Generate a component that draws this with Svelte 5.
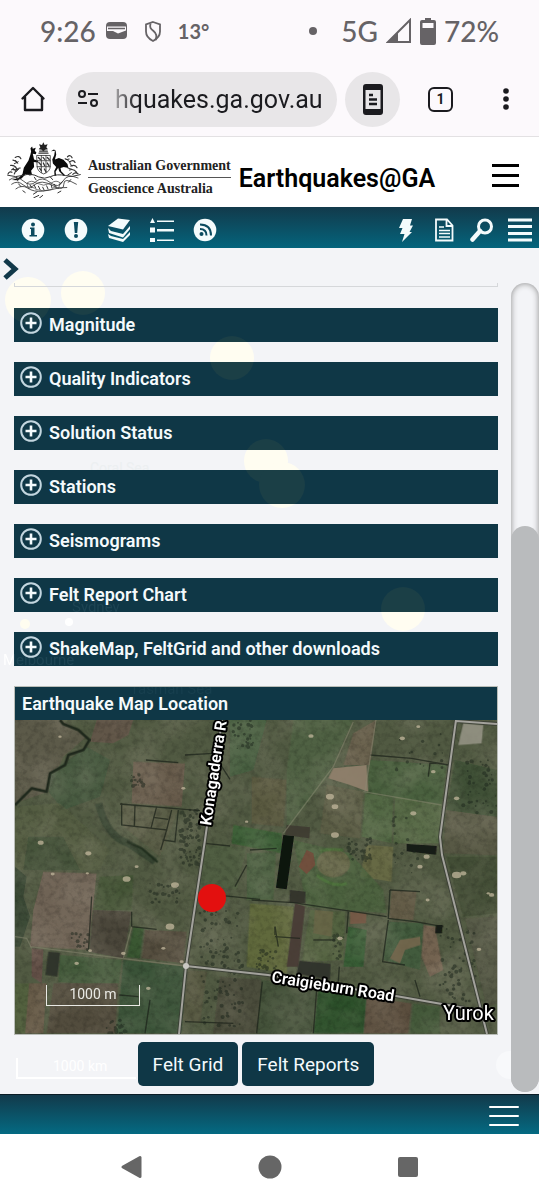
<script>
  const sections = [
    'Magnitude',
    'Quality Indicators',
    'Solution Status',
    'Stations',
    'Seismograms',
    'Felt Report Chart',
    'ShakeMap, FeltGrid and other downloads'
  ];
  let open = $state(-1);

  const quakes = [
    [28, 52, 23], [83, 45, 22], [232, 110, 22], [266, 213, 22], [282, 237, 23], [403, 361, 22]
  ];

  // [fill, opacity, polygon points] for paddocks on the aerial map
  const fields = [
    ['#625c49', 0.75, '45,30 185,30 260,80 190,140 145,245 45,280'],
    ['#3f5a3c', 0.7, '150,190 260,110 330,150 300,260 190,300 145,245'],
    ['#6b5648', 0.7, '290,30 400,30 385,75 340,100 270,95'],
    ['#6e5b4a', 0.8, '400,155 555,160 545,290 395,280'],
    ['#5a5b42', 0.7, '360,285 535,300 480,440 370,350'],
    ['#56603f', 0.7, '45,290 180,280 330,420 300,480 45,480'],
    ['#3c5235', 0.7, '85,380 190,380 240,480 70,480'],
    ['#776555', 0.85, '130,485 290,490 265,720 90,710 100,600'],
    ['#3e552f', 0.7, '300,500 400,495 395,600 280,600'],
    ['#4a4338', 0.9, '280,600 395,605 370,745 268,725'],
    ['#34562f', 0.9, '400,650 432,655 420,745 380,742'],
    ['#564b3b', 0.8, '435,660 560,665 550,760 425,745'],
    ['#6b4d48', 0.8, '95,715 130,718 125,820 95,800'],
    ['#6f5c47', 0.8, '85,820 140,820 130,970 75,970'],
    ['#53613a', 0.8, '45,820 88,820 75,970 45,970'],
    ['#3b5a33', 0.8, '180,735 365,750 355,830 175,815'],
    ['#544a3a', 0.85, '160,820 355,820 345,970 140,970'],
    ['#315334', 0.85, '370,750 558,770 545,970 350,970'],
    ['#59583f', 0.8, '565,780 620,785 600,940 548,930'],
    ['#3f623c', 0.7, '690,30 800,30 760,180 690,200'],
    ['#286026', 0.75, '700,345 845,370 845,430 695,400'],
    ['#60583c', 0.7, '755,200 860,210 850,350 755,340'],
    ['#50603f', 0.8, '615,405 740,410 710,540 600,520'],
    ['#4d6440', 0.8, '880,30 1060,30 990,190 860,360 860,180'],
    ['#70614c', 0.8, '1060,70 1128,30 1110,165 1030,165'],
    ['#5f5e42', 0.8, '980,225 1090,245 1080,385 960,370'],
    ['#4f6b3d', 0.8, '1095,250 1180,262 1175,400 1085,380'],
    ['#446338', 0.8, '1110,150 1340,165 1325,285 1100,250'],
    ['#516b3f', 0.8, '1185,260 1325,285 1320,400 1180,400'],
    ['#6c6d40', 0.8, '1100,405 1180,410 1175,515 1080,500'],
    ['#47643a', 0.8, '880,390 1050,430 1150,540 1160,610 920,590'],
    ['#5a5842', 0.8, '1340,300 1491,320 1491,435 1330,430'],
    ['#37502f', 0.8, '1365,150 1491,180 1491,320 1340,300'],
    ['#3f4d30', 0.8, '1340,440 1491,440 1491,610 1390,620'],
    ['#565843', 0.8, '1395,625 1491,620 1491,880 1460,890'],
    ['#5f6b34', 0.9, '750,580 882,590 860,790 740,770'],
    ['#3f5d35', 0.8, '740,430 828,425 820,570 740,570'],
    ['#53673b', 0.8, '930,600 1035,605 1030,750 905,755'],
    ['#2b5d2c', 0.9, '1045,650 1100,660 1090,770 1030,770'],
    ['#63553f', 0.8, '1175,540 1250,545 1240,630 1168,625'],
    ['#3c5c39', 0.8, '1165,635 1270,640 1260,780 1150,750'],
    ['#7c6550', 0.85, '1272,645 1305,650 1330,780 1290,800 1265,740'],
    ['#4b4a39', 0.8, '660,800 785,810 775,970 640,970'],
    ['#3d5133', 0.8, '785,810 950,840 935,970 770,970'],
    ['#265126', 0.9, '955,840 1100,860 1090,970 940,970'],
    ['#5e4c3b', 0.9, '1100,860 1235,880 1225,970 1092,970'],
    ['#3f5a35', 0.8, '1240,880 1320,890 1320,970 1230,970']
  ];

  // dams, plantations and bare ground that stand out from the paddocks
  const blocks = [
    ['#8f806c', 0.95, '1000,175 1100,165 1105,245 1050,225 985,205'],
    ['#0a120d', 1, '850,375 882,378 860,538 828,533'],
    ['#483b36', 0.95, '885,580 915,590 895,770 860,770'],
    ['#30302a', 0.9, '870,540 917,545 915,580 868,578'],
    ['#2f312b', 0.95, '898,752 992,762 990,810 890,790'],
    ['#151a14', 1, '1220,402 1310,408 1308,434 1220,424'],
    ['#2c3129', 0.9, '145,725 180,728 172,800 136,795'],
    ['#3d3a31', 0.9, '860,345 930,352 928,385 855,375'],
    ['#7a4538', 0.75, '920,420 940,430 946,465 920,492 896,470'],
    ['#72654a', 0.6, '945,600 1000,605 995,680 940,670'],
    ['#7d5b49', 0.8, '1050,605 1100,610 1098,640 1050,642'],
    ['#9c9a8c', 0.8, '1390,40 1450,45 1445,100 1375,105'],
    ['#151a14', 1, '1308,645 1328,645 1326,670 1306,670'],
    ['#7b6850', 0.8, '1200,690 1260,680 1262,705 1215,720 1200,760 1170,745']
  ];

  const hedges = [
    '365,280 365,345 500,360 515,300', '405,285 403,350', '360,282 600,302', '470,290 453,355',
    '460,322 505,328', '500,360 482,420', '535,300 525,395 488,390', '438,150 535,158', '555,135 640,130 690,208',
    '395,605 395,650 470,658', '615,400 690,408', '600,550 750,565 780,568', '740,465 705,530',
    '450,870 435,970', '358,855 415,860', '555,935 700,940', '755,570 880,578 1160,620',
    '825,675 825,650', '825,680 900,685', '1110,135 1235,145 1345,165', '1285,200 1290,160 1310,160',
    '1170,540 1260,545', '1170,540 1165,625 1245,635 1330,650', '1165,630 1148,755 1215,765',
    '1045,605 1040,670', '950,840 940,970', '787,815 770,970', '1018,770 1015,815', '940,690 1005,690',
    '825,650 835,710', '750,420 830,415', '1245,810 1260,860', '275,560 265,725'
  ];

  const tracks = [
    '90,710 365,745 558,768', '395,650 370,745', '1060,35 1000,170 850,370', '1128,30 1095,245', '1090,245 1325,285',
    '45,680 80,685 95,715'
  ];

  const houses = [
    [122, 398, 9], [265, 430, 9], [158, 492, 6], [262, 490, 5], [380, 507, 12], [410, 470, 6], [525, 525, 12],
    [510, 650, 13], [545, 755, 6], [270, 722, 6], [370, 730, 7], [230, 760, 7], [445, 835, 7], [180, 80, 5],
    [933, 78, 8], [1255, 50, 6], [1207, 85, 8], [990, 260, 12], [1005, 290, 10], [1005, 375, 12], [1240, 310, 9],
    [1370, 495, 14], [1390, 490, 9], [1280, 440, 9], [1260, 470, 8], [1370, 265, 8], [1475, 555, 8], [1465, 550, 5],
    [1437, 718, 7], [1283, 570, 6], [550, 235, 6], [490, 715, 6], [1300, 185, 7], [740, 335, 5], [1020, 685, 8]
  ];

  // deterministic scatter for tree clusters
  function scatter(seed, n, x, y, w, h) {
    const out = [];
    let s = seed;
    const next = () => (s = (s * 16807) % 2147483647) / 2147483647;
    for (let i = 0; i < n; i++) out.push([Math.round(x + next() * w), Math.round(y + next() * h), 2 + Math.round(next() * 4)]);
    return out;
  }
  const trees = [
    ...scatter(11, 90, 540, 300, 60, 165),
    ...scatter(23, 110, 600, 600, 130, 350),
    ...scatter(37, 40, 1390, 130, 100, 180),
    ...scatter(41, 40, 1045, 385, 70, 70),
    ...scatter(59, 50, 1320, 650, 110, 230),
    ...scatter(61, 25, 450, 520, 90, 60),
    ...scatter(73, 20, 320, 930, 60, 40),
    ...scatter(79, 25, 700, 30, 60, 90),
    ...scatter(83, 15, 1190, 60, 140, 130),
    ...scatter(89, 25, 770, 720, 60, 60),
    ...scatter(97, 20, 1000, 670, 35, 80),
    ...scatter(101, 18, 215, 670, 50, 50),
    ...scatter(103, 20, 395, 190, 40, 40),
    ...scatter(107, 20, 1180, 320, 80, 180)
  ];
</script>

<div class="screen">
  <div class="status">
    <span class="clock">9:26</span>
    <svg class="s-card" viewBox="0 0 22 18" width="22" height="18"><rect width="21" height="17" rx="4" fill="#666366" /><path d="M1 4.500h19v4l-8 3-5-2.500H1Z" fill="#fcf9fc" /><path d="M2 6.500h17" stroke="#666366" stroke-width="1.500" /></svg>
    <svg class="s-shield" viewBox="0 0 18 21" width="18" height="21" fill="none" stroke="#666366" stroke-width="1.800"><path d="M9 1 16 3.500v7C16 15 13 18 9 20 5 18 2 15 2 10.500v-7Z" /><path d="M6.500 2.500c-1 4 0 5 3 7.500s4 5 2 9" /></svg>
    <span class="temp">13°</span>
    <span class="grow"></span>
    <span class="dot"></span>
    <span class="net">5G</span>
    <svg class="s-signal" viewBox="0 0 26 26" width="26" height="26"><path d="M2 24 24 2v22Z" fill="none" stroke="#666366" stroke-width="2" /><path d="M1 25 12 14v11Z" fill="#666366" /></svg>
    <svg class="s-batt" viewBox="0 0 16 27" width="16" height="27"><path fill="#666366" fill-rule="evenodd" d="M5 0h6v2h3q2 0 2 2v21q0 2-2 2H2q-2 0-2-2V4q0-2 2-2h3ZM2.500 5v5h11V5Z" /></svg>
    <span class="pct">72%</span>
  </div>

  <div class="browser">
    <button class="plain home" aria-label="Home"><svg viewBox="0 0 26 26" width="26" height="26" fill="none" stroke="#1b1b1f" stroke-width="2.400" stroke-linejoin="round" stroke-linecap="round"><path d="M2.500 12.500 13 2l10.500 10.500M5 11v13h17V11" /></svg></button>
    <div class="url">
      <svg viewBox="0 0 22 18" width="22" height="18" fill="none" stroke="#1b1b1f" stroke-width="2"><circle cx="5" cy="4" r="3" /><path d="M11 4h10M1 13h9" /><circle cx="17" cy="13" r="3" /></svg>
      <input aria-label="Address" value="hquakes.ga.gov.au" />
    </div>
    <button class="plain reader" aria-label="Reading mode"><svg viewBox="0 0 20 31" width="20" height="31"><path fill="#1b1b1f" fill-rule="evenodd" d="M3 0h14q3 0 3 3v25q0 3-3 3H3q-3 0-3-3V3q0-3 3-3ZM2.500 6v19h15V6Z" /><path d="M6 11h4M6 15.500h8M6 20h8" stroke="#1b1b1f" stroke-width="2.400" /></svg></button>
    <button class="plain tabs" aria-label="Tabs">1</button>
    <button class="plain" aria-label="More"><svg viewBox="0 0 6 22" width="6" height="22" fill="#1b1b1f"><circle cx="3" cy="3" r="2.800" /><circle cx="3" cy="11" r="2.800" /><circle cx="3" cy="19" r="2.800" /></svg></button>
  </div>

  <header>
    <svg class="crest" viewBox="18 24 230 168" width="76" height="56" fill="none" stroke="#333" stroke-width="3" stroke-linecap="round">
      <path fill="#222" stroke="none" d="m131 24 4 8 9-2-4 9 5 6-9 2-5 5-5-5-9-2 5-6-4-9 9 2Z" />
      <path d="M120 51h23M118 57h27" stroke-width="4" />
      <path fill="#0a0a0a" stroke="none" d="m92 42 5-5 2 7 9-3-3 9 5 5-2 5-9-1 4 17 12 4v5l-13-1 1 15-9 11 3 13-7 2-12-5-13 14-12 5-18-1 21-6 12-12 4-19 14-22 6-18 2-9Z" />
      <path fill="#0a0a0a" stroke="none" d="m154 51 9-5 5 3 2 12-4 15 12-4 14 5 12 13 3 12-14-3-10 3 2 10 12 12-4 2-14-14-3-11-8 12 2 12-5 1-1-15 6-12-10-11-2-12 6-13 2-13-12 1Z" />
      <path d="M112 64h40v32q0 17-20 24-20-7-20-24ZM112 80h40M112 98h40M125 64v52M139 64v52" stroke-width="2.500" />
      <path d="m116 70 6 6m8-6 5 6m8-6 6 6m-32 9 7 8m7-6 4 8m8-8 5 8m-28 8 5 7m9-5 5 8" stroke-width="4" />
      <path d="M23 124q25 8 48 0t46 5q18 8 36-1t46-3q20 6 44-3" stroke-width="3" />
      <path d="M28 138q21-16 42 3t39 2 43 3 38-4 46-10M35 151q17-13 35 2t36-1 53 3 34-4 38 0M48 165q18-14 36-2t44 9 38-7 36-4" stroke-width="2.500" />
      <path d="M82 147q14-10 26 0l24 7 24-7q14-10 26 0l-5 17q-14-8-22 3-25 8-46 0-9-11-22-3Z" stroke-width="2" />
      <path d="m91 154 5 7m7-8 5 10m8-6 5 10m8-7 4 8m8-12 4 9m10-12 2 9m7-11 5 7" />
      <path d="M43 120q8-20 18-18M38 106q12 3 17 0M32 94q14-1 18 10M39 78q9 1 13 9M46 70q12-7 17 4M36 115q-7-4-12 5M204 68q9-8 14 3M210 84q12-9 17 1M214 96q14-6 19 5M210 108q13-5 22 7M220 121q7-7 16-2M197 74q6 4 12 1" stroke-width="3.500" />
      <path d="m42 102-8 6m21-25-12 6m14 15-8 9m-2-34 6 8m159 1 5 8m-12 6 13 4m-2 10-11 7m-2-46 9 7m-110 108 15-7m2 8 10-8M101 181l11-7M69 171l7 5m108-4-9 5M54 141l-5-11m15 29-8-9m48-20 5 8m43-9 7 8m30 6-8 7m33-13-7 8" stroke-width="3" />
    </svg>
    <div class="gov"><span>Australian Government</span><span>Geoscience Australia</span></div>
    <h1>Earthquakes@GA</h1>
    <button class="plain menu" aria-label="Menu"><i></i><i></i><i></i></button>
  </header>

  <nav class="tools">
    <button class="plain" aria-label="Information"><svg viewBox="0 0 24 24" width="24" height="24"><circle cx="12" cy="12" r="11.300" fill="#f4fbfc" /><circle cx="12" cy="6.500" r="2" fill="#0b4b5f" /><path d="M9 9.500h4.500V17H16v1.500H8.500V17H10v-6H9Z" fill="#0b4b5f" /></svg></button>
    <button class="plain" aria-label="Alerts"><svg viewBox="0 0 24 24" width="24" height="24"><circle cx="12" cy="12" r="11.300" fill="#f4fbfc" /><path d="M9.800 4h4.400l-1 11h-2.400Z" fill="#0b4b5f" /><circle cx="12" cy="18" r="2" fill="#0b4b5f" /></svg></button>
    <button class="plain" aria-label="Layers"><svg viewBox="0 0 24 24" width="24" height="24" fill="#f4fbfc"><path d="m11 .500 12 1.500-7 9.500L1 8Z" /><path d="m1 10 3 3 12 3 7-8v3l-7 8.500L2 15ZM1 16l3 2 12 3 7-7v3l-7 7L2 20Z" /></svg></button>
    <button class="plain" aria-label="Legend"><svg viewBox="0 0 24 24" width="24" height="24" fill="#f4fbfc"><path d="m2.500 0 2.500 5H0ZM7 2.500h17v1.500H7ZM0 9.500h5v5H0ZM7 11h17v2.500H7ZM0 20h5v4H0ZM7 21.500h17V23H7Z" /></svg></button>
    <button class="plain" aria-label="Feed"><svg viewBox="0 0 24 24" width="24" height="24"><circle cx="12" cy="12" r="11.300" fill="#f4fbfc" /><g fill="none" stroke="#0b4b5f" stroke-width="2"><path d="M7 6.500q11 0 11 11M7 11q6.500 0 6.500 6.500" /></g><circle cx="8.500" cy="16" r="2" fill="#0b4b5f" /></svg></button>
    <span class="grow"></span>
    <button class="plain" aria-label="Recent quakes"><svg viewBox="0 0 24 24" width="24" height="24" fill="#f4fbfc"><path d="M9 1h9l-2 6.500h3L15.500 14H18L8 24l2.500-8H6l2.500-6H5Z" /></svg></button>
    <button class="plain" aria-label="Report"><svg viewBox="0 0 24 24" width="24" height="24" fill="none" stroke="#f4fbfc" stroke-width="1.800"><path d="M4 1.500h11l5.500 6V22.500H4ZM14.500 2v6h6" /><path d="M7 9h5M7 12.500h11M7 15.500h11M7 19h11" stroke-width="1.500" /></svg></button>
    <button class="plain" aria-label="Search"><svg viewBox="0 0 24 24" width="24" height="24" fill="none" stroke="#f4fbfc"><circle cx="15" cy="8.500" r="6.500" stroke-width="3" /><path d="m10 13-7.500 8.500" stroke-width="4.500" stroke-linecap="round" /></svg></button>
    <button class="plain" aria-label="List"><svg viewBox="0 0 24 24" width="24" height="24" stroke="#f4fbfc" stroke-width="3"><path d="M0 2h24M0 8.500h24M0 15.500h24M0 22h24" /></svg></button>
  </nav>

  <main>
    <svg class="ghost" viewBox="0 0 539 846" aria-hidden="true">
      {#each quakes as [x, y, r]}<circle cx={x} cy={y} {r} fill="#fffdf1" />{/each}
      <circle cx="25" cy="376" r="5" fill="#fffdf0" /><circle cx="69" cy="374" r="4" fill="#fff" /><circle cx="510" cy="817" r="14" fill="#f8f9fb" />
      <path d="M17 810v20h119" fill="none" stroke="#fff" stroke-width="2" />
      <text x="53" y="823" fill="#fff" font-size="14">1000 km</text>
      <text x="90" y="225" fill="#eceff1" font-size="14">Coral Sea</text>
    </svg>

    <button class="plain collapse" aria-label="Show panel"><svg viewBox="0 0 16 22" width="16" height="22"><path d="m2 2 10 9-10 9" fill="none" stroke="#12394a" stroke-width="5" /></svg></button>

    <div class="panel">
      <div class="group-end"></div>
      {#each sections as title, i}
        <button class="bar" aria-expanded={open === i} onclick={() => (open = open === i ? -1 : i)}>
          <svg viewBox="0 0 22 22" width="22" height="22" fill="none"><circle cx="11" cy="11" r="9.800" stroke="#c3d6df" stroke-width="2" /><path d="M11 5.500v11M5.500 11h11" stroke="#f4fafc" stroke-width="2.600" /></svg>
          {title}
        </button>
      {/each}

      <section>
        <h2>Earthquake Map Location</h2>
        <div class="map">
          <svg viewBox="15 720 482 314" role="img" aria-label="Earthquake location">
            <defs>
              <filter id="grain" x="0" y="0" width="100%" height="100%"><feTurbulence type="fractalNoise" baseFrequency="0.180" numOctaves="4" seed="7" /><feColorMatrix values="0 0 0 0 0  0 0 0 0 0  0 0 0 0 0  2 0 0 0 -0.850" /></filter>
              <filter id="patches" x="0" y="0" width="100%" height="100%"><feTurbulence type="fractalNoise" baseFrequency="0.025" numOctaves="3" seed="4" /><feColorMatrix values="0 0 0 0 0.480  0 0 0 0 0.430  0 0 0 0 0.340  0 2 0 0 -0.700" /></filter>
              <filter id="soft"><feGaussianBlur stdDeviation="2" /></filter>
            </defs>
            <rect x="15" y="720" width="482" height="314" fill="#515a42" />
            <g transform="translate(0 710) scale(.3333)">
              <g class="paddocks">
                <g filter="url(#soft)">
                  {#each fields as [fill, opacity, points]}<polygon {fill} {opacity} {points} />{/each}
                </g>
              </g>
              <path d="M295 280q25 100 90 120l80 55" fill="none" stroke="#2b3a2b" stroke-width="22" opacity=".6" filter="url(#soft)" />
              <path d="m380 395 45 20 48 42" fill="none" stroke="#22301f" stroke-width="7" />
              <ellipse cx="1000" cy="460" rx="50" ry="42" fill="#716a4d" opacity=".7" filter="url(#soft)" />
              <path d="M950 495q50 40 90 25M960 425q20-10 70-5" fill="none" stroke="#4f7a3d" stroke-width="9" opacity=".7" filter="url(#soft)" />
              <path d="m45 470 35 30-10 60 20 60-30 90-15 0Z" fill="#2b3c2c" opacity=".7" filter="url(#soft)" />
            </g>
            <rect x="15" y="720" width="482" height="314" filter="url(#patches)" opacity=".22" />
            <rect x="15" y="720" width="482" height="314" filter="url(#grain)" opacity=".2" />
            <g transform="translate(0 710) scale(.3333)">
              <g filter="url(#soft)">{#each blocks as [fill, opacity, points]}<polygon {fill} {opacity} {points} />{/each}</g>
              <path d="m180 30 10 12 45 18 33 30-18 30-45 15-10 30-45 25-10 55-45-10-50 50" fill="none" stroke="#1f281c" stroke-width="8" stroke-linejoin="round" />
              <g fill="none" stroke="#1b2119" stroke-width="4" opacity=".7">{#each hedges as points}<polyline {points} />{/each}</g>
              <g fill="none" stroke="#8b8a73" stroke-width="4" opacity=".5">{#each tracks as points}<polyline {points} />{/each}</g>
              <g fill="#1b241b" opacity=".5">{#each trees as [x, y, r]}<circle cx={x} cy={y} {r} />{/each}</g>
              <g fill="#c2b79d" opacity=".75" filter="url(#soft)">{#each houses as [x, y, r]}<ellipse cx={x} cy={y} rx={r} ry={r * 0.7} />{/each}</g>
            </g>
            <g fill="none" stroke-linejoin="round">
              <g stroke="#3a3d35" stroke-width="4" opacity=".8"><path d="m222 720-17 120-19 126-7 68M186 966l82 9 122 20 75 13M456 720l-16 117 2 18 45 179M456 721l41 3" /></g>
              <g stroke="#a3a29c" stroke-width="2"><path d="m222 720-17 120-19 126-7 68M186 966l82 9 122 20 75 13M456 720l-16 117 2 18 45 179M456 721l41 3" /></g>
            </g>
            <circle cx="186" cy="966" r="3" fill="#c9c8c2" />
            <circle cx="212" cy="898" r="14" fill="#e3100f" />
            <g class="labels">
              <text transform="translate(211 826) rotate(-81.500)">Konagaderra R</text>
              <text transform="translate(271 982) rotate(9)">Craigieburn Road</text>
              <text class="town" x="443" y="1020">Yurok</text>
            </g>
          </svg>
          <div class="scale">1000 m</div>
        </div>
      </section>

      <div class="actions"><button>Felt Grid</button><button>Felt Reports</button></div>
    </div>

    <div class="track"><div class="thumb"></div></div>

    <svg class="ghost tint" viewBox="0 0 539 846" aria-hidden="true">
      <defs><linearGradient id="edge" gradientUnits="userSpaceOnUse" x1="13" y1="0" x2="14" y2="0"><stop stop-color="#fff" /><stop offset="1" stop-color="#1d4453" /></linearGradient></defs>
      {#each quakes as [x, y, r]}<circle cx={x} cy={y} {r} fill="#1b3f44" />{/each}
      <text x="72" y="364" fill="#1d4453" font-size="15">Sydney</text>
      <text x="3" y="417" fill="url(#edge)" font-size="15">Melbourne</text>
      <text x="130" y="446" fill="#173f4e" font-size="15">Tasman Sea</text>
    </svg>
  </main>

  <footer><button class="plain menu" aria-label="Footer menu"><i></i><i></i><i></i></button></footer>

  <nav class="android">
    <button class="plain" aria-label="Back"><svg viewBox="0 0 24 24" width="24" height="24"><path d="M3 12 20 2.500v19Z" fill="#666" stroke="#666" stroke-width="3" stroke-linejoin="round" /></svg></button>
    <button class="plain" aria-label="Home screen"><svg viewBox="0 0 24 24" width="24" height="24"><circle cx="12" cy="12" r="11.500" fill="#666" /></svg></button>
    <button class="plain" aria-label="Overview"><svg viewBox="0 0 24 24" width="24" height="24"><rect x="2" y="2" width="20" height="20" rx="2" fill="#666" /></svg></button>
  </nav>
</div>

<style>
  :global(body) { margin: 0; background: #fff; }
  .screen { font-family: Roboto, "Liberation Sans", sans-serif; min-height: 100vh; display: flex; flex-direction: column; overflow: hidden; }
  svg { display: block; flex: none; }
  button, input { font: inherit; color: inherit; }
  .plain { border: 0; background: none; padding: 0; display: flex; align-items: center; justify-content: center; flex: none; }
  .grow { flex: 1; }

  .status { height: 62px; box-sizing: border-box; padding: 0 40px; display: flex; align-items: center; background: #fcf9fc; color: #666366; font-family: Lato, Roboto, sans-serif; font-size: 28px; font-weight: 500; }
  .s-card { margin-left: 10px; }
  .s-shield { margin-left: 16px; }
  .temp { font-size: 20px; font-weight: 700; margin-left: 16px; }
  .dot { width: 8px; height: 8px; border-radius: 50%; background: #666366; margin-right: 24px; }
  .s-signal { margin: 0 8px; }
  .s-batt { margin-right: 8px; }

  .browser { height: 75px; display: flex; align-items: center; box-sizing: border-box; padding: 0 30px 0 20px; background: #fcf9fc; border-bottom: 1px solid #e3e1e3; color: #1b1b1f; }
  .url { flex: 1; min-width: 0; height: 55px; margin-left: 20px; padding: 0 8px 0 11px; border-radius: 28px; background: #e8e6e8; display: flex; align-items: center; gap: 16px; box-sizing: border-box; }
  .url input { flex: 1; min-width: 0; width: 0; border: 0; padding: 0; background: linear-gradient(90deg, #a5a3a5, #1b1b1f 22px); background-clip: text; -webkit-text-fill-color: transparent; font-size: 25px; outline: 0; }
  .reader { width: 55px; height: 55px; border-radius: 50%; background: #e8e6e8; margin-left: 8px; }
  .tabs { width: 25px; height: 25px; box-sizing: border-box; border: 2px solid #1b1b1f; border-radius: 6px; margin: 0 50px 0 28px; font-size: 14px; font-weight: 700; }

  header { height: 70px; display: flex; align-items: center; padding: 0 20px 0 6px; background: #fff; }
  .crest { margin-bottom: 4px; }
  .gov { margin: 10px 8px 0 6px; font: 700 14px/22px "Liberation Serif", serif; color: #222; white-space: nowrap; }
  .gov span { display: block; }
  .gov span:first-child { border-bottom: 1px solid #555; }
  h1 { flex: 1; margin: 14px 0 0; font-size: 25px; line-height: 30px; font-weight: 600; color: #000; }
  .menu { flex-direction: column; gap: 7px; }
  header .menu { margin-top: 6px; }
  .menu i { display: block; width: 27px; height: 3px; background: #000; }

  .tools { height: 41px; display: flex; align-items: center; gap: 18px; padding: 4px 7px 0 20px; box-sizing: border-box; background: linear-gradient(#123a4b, #04647c); }
  .tools .grow { margin: 0 -18px; }
  .tools > .grow ~ button { margin-right: -5px; }
  .tools > .grow ~ button:last-child { margin-right: 0; }
  .tools .plain { width: 25px; }

  main { position: relative; flex: 1; display: flex; background: #f3f4f7; }
  .ghost { position: absolute; left: 0; top: 0; width: 100%; pointer-events: none; }
  .tint { mix-blend-mode: lighten; }
  .collapse { position: absolute; left: 3px; top: 10px; }
  .panel { position: relative; flex: 1; min-width: 0; padding: 35px 13px 8px 14px; display: flex; flex-direction: column; }
  .group-end { height: 4px; border: 1px solid #d5d7da; border-top: 0; box-sizing: border-box; margin-bottom: 21px; }
  .bar, h2 { background: #0f3746; color: #f4fafc; font-size: 18px; font-weight: 600; }
  .bar { height: 34px; margin: 0 0 20px; border: 0; padding: 0 6px; display: flex; align-items: center; gap: 7px; text-align: left; line-height: 20px; }
  .bar svg { margin-bottom: 4px; }
  section { border: 1px solid #b9bdb8; }
  h2 { margin: 0; height: 33px; line-height: 33px; padding: 0 7px; }
  .map { position: relative; }
  .map svg { width: 100%; }
  .paddocks { filter: saturate(0.85); }
  .labels { font-size: 16px; font-weight: 600; fill: #fff; stroke: #000; stroke-width: 4px; paint-order: stroke; stroke-linejoin: round; }
  .town { font-size: 20px; font-weight: 400; }
  .scale { position: absolute; left: 31px; bottom: 28px; width: 92px; height: 20px; border: 1px solid #e9e9e4; border-top: 0; color: #e9e9e4; font-size: 14px; line-height: 18px; text-align: center; }
  .actions { display: flex; justify-content: center; gap: 4px; margin-top: 7px; }
  .actions button { height: 44px; padding: 0 15px; border: 0; border-radius: 5px; background: #0f3746; color: #f4fafc; font-size: 19px; }
  .track { position: relative; width: 28px; flex: none; margin: 35px 0 2px; border-radius: 14px; box-sizing: border-box; box-shadow: inset 0 0 6px #888; overflow: hidden; display: flex; align-items: flex-end; }
  .thumb { width: 100%; height: 70%; border-radius: 14px; background: #b9bbbd; }

  footer { height: 40px; box-sizing: border-box; border-top: 1px solid #0a1c26; display: flex; align-items: center; justify-content: flex-end; padding: 2px 20px 0 0; background: linear-gradient(#123a4b, #046a82); }
  footer .menu i { width: 30px; height: 2px; background: #fff; border-radius: 1px; }
  .android { height: 66px; display: flex; align-items: center; justify-content: center; gap: 114px; background: #fff; }
</style>
